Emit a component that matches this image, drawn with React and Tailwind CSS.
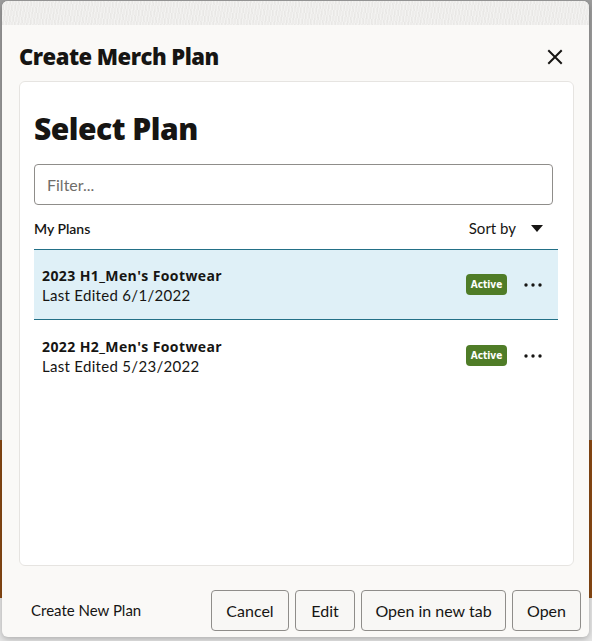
import { Fragment } from 'react';

const plans = [
  { name: "2023 H1_Men's Footwear", edited: '6/1/2022', status: 'Active', selected: true },
  { name: "2022 H2_Men's Footwear", edited: '5/23/2022', status: 'Active', selected: false },
];

const CloseIcon = () => (
  <svg width="16" height="16" viewBox="0 0 16 16" fill="none" stroke="#161513" strokeWidth="2" strokeLinecap="square">
    <path d="M2 2L14 14M14 2L2 14" />
  </svg>
);

const Caret = () => (
  <svg width="12" height="7" viewBox="0 0 12 7" fill="#161513">
    <path d="M0 0h12L6 7z" />
  </svg>
);

const Dots = () => (
  <svg width="18" height="4" viewBox="0 0 18 4" fill="#161513">
    <circle cx="2" cy="2" r="1.7" />
    <circle cx="9" cy="2" r="1.7" />
    <circle cx="16" cy="2" r="1.7" />
  </svg>
);

const Badge = ({ children }) => (
  <span className="inline-flex h-[21px] w-[41px] items-center justify-center rounded-[4px] bg-[#4f7c27] text-[10px] font-bold text-white [font-family:'DejaVu_Sans_Condensed','Liberation_Sans',sans-serif]">
    {children}
  </span>
);

const FooterButton = ({ children, className = '' }) => (
  <button className={`h-[41px] rounded-[4px] border border-[#8f8d8a] bg-[#f8f7f5] text-[16px] text-[#161513] ${className}`}>
    {children}
  </button>
);

const heavy = "[font-family:'Open_Sans',Lato,sans-serif]";

export default function App() {
  return (
    <div className="h-[641px] w-[592px] overflow-hidden bg-[linear-gradient(to_bottom,#9c9c9c_0,#9c9c9c_440px,#8a4a14_440px,#8a4a14_598px,#e6e6e6_598px)] pt-[1px] [font-family:Lato,'Noto_Sans',sans-serif]">
      {/* Dialog */}
      <div className="mx-[2px] flex h-[636px] w-[587px] flex-col overflow-hidden rounded-[6px] bg-[#faf9f7] shadow-[0_2px_6px_rgba(0,0,0,0.25)]">
        {/* textured header band */}
        <div className="h-[24px] shrink-0 bg-[#edecea] bg-[repeating-linear-gradient(100deg,rgba(255,255,255,0.35)_0_1px,transparent_1px_3px),repeating-linear-gradient(80deg,rgba(0,0,0,0.018)_0_1px,transparent_1px_4px)]" />

        <div className="flex h-[56px] shrink-0 items-center justify-between pl-[17px] pr-[26px] pt-[6px]">
          <h1 className={`text-[22px] font-extrabold tracking-[-0.5px] text-[#161513] ${heavy}`}>Create Merch Plan</h1>
          <button aria-label="Close" className="flex items-center justify-center pt-[2px]">
            <CloseIcon />
          </button>
        </div>

        {/* Panel */}
        <div className="ml-[17px] mr-[15px] flex h-[485px] shrink-0 flex-col rounded-[6px] border border-[#e6e4e1] bg-white pl-[14px] pr-[15px] pt-[28px]">
          <h2 className={`text-[30px] font-extrabold leading-[37px] tracking-[-0.5px] text-[#161513] ${heavy}`}>Select Plan</h2>

          <input
            placeholder="Filter..."
            className="mr-[5px] mt-[17px] h-[41px] rounded-[4px] border border-[#8f8d8a] bg-white px-[12px] text-[16px] text-[#161513] outline-none placeholder:text-[#6f6d6a]"
          />

          <div className="flex h-[44px] items-center justify-between pt-[3px]">
            <span className="text-[14px] font-semibold text-[#161513]">My Plans</span>
            <div className="flex items-center gap-[15px] pr-[15px]">
              <span className="text-[15px] text-[#161513]">Sort by</span>
              <Caret />
            </div>
          </div>

          <ul>
            {plans.map((p) => (
              <li
                key={p.name}
                className={`flex h-[71px] items-center justify-between pl-[8px] pr-[16px] ${
                  p.selected ? 'border-y border-[#237087] bg-[#dff0f7]' : 'border-y border-transparent'
                }`}
              >
                <div className="pt-[2px]">
                  <div className={`text-[14px] font-bold leading-[19px] tracking-[0.4px] text-[#161513] ${heavy}`}>{p.name}</div>
                  <div className="text-[15px] leading-[21px] tracking-[0.3px] text-[#161513]">Last Edited {p.edited}</div>
                </div>
                <div className="flex items-center gap-[17px]">
                  <Badge>{p.status}</Badge>
                  <Dots />
                </div>
              </li>
            ))}
          </ul>
        </div>

        {/* Footer */}
        <div className="flex flex-1 items-start justify-between pl-[29px] pr-[8px] pt-[24px]">
          <button className="h-[41px] text-[15px] text-[#161513]">Create New Plan</button>
          <div className="flex gap-[6px]">
            <FooterButton className="w-[78px]">Cancel</FooterButton>
            <FooterButton className="w-[60px]">Edit</FooterButton>
            <FooterButton className="w-[145px]">Open in new tab</FooterButton>
            <FooterButton className="w-[69px]">Open</FooterButton>
          </div>
        </div>
      </div>
    </div>
  );
}
